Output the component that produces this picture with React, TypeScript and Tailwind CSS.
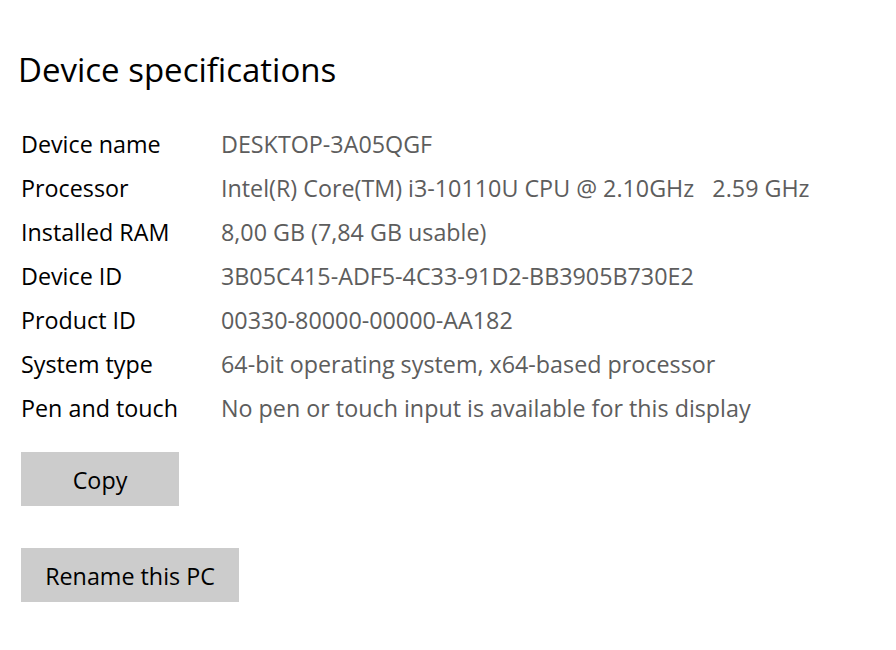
const SPECS = [
  { label: 'Device name', value: 'DESKTOP-3A05QGF' },
  { label: 'Processor', value: 'Intel(R) Core(TM) i3-10110U CPU @ 2.10GHz   2.59 GHz' },
  { label: 'Installed RAM', value: '8,00 GB (7,84 GB usable)' },
  { label: 'Device ID', value: '3B05C415-ADF5-4C33-91D2-BB3905B730E2' },
  { label: 'Product ID', value: '00330-80000-00000-AA182' },
  { label: 'System type', value: '64-bit operating system, x64-based processor' },
  { label: 'Pen and touch', value: 'No pen or touch input is available for this display' },
]

export default function App() {
  return (
    <div className="w-[896px] h-[650px] bg-white pl-[21px] pt-[48px] font-['Open_Sans',sans-serif] text-black">
      <h1 className="-ml-[3px] text-[33px] leading-[44px] font-normal">Device specifications</h1>

      <div className="mt-[30px] flex flex-col">
        {SPECS.map(spec => (
          <div key={spec.label} className="flex h-[44px] items-center text-[23.3px]">
            <span className="w-[200px] shrink-0">{spec.label}</span>
            <span className="whitespace-pre text-[#5d5d5d]">{spec.value}</span>
          </div>
        ))}
      </div>

      <button className="mt-[22px] block w-[158px] h-[54px] bg-[#cccccc] pt-[2px] text-[23.3px]">Copy</button>
      <button className="mt-[42px] block w-[218px] h-[54px] bg-[#cccccc] pt-[2px] text-[23.3px]">Rename this PC</button>
    </div>
  )
}
